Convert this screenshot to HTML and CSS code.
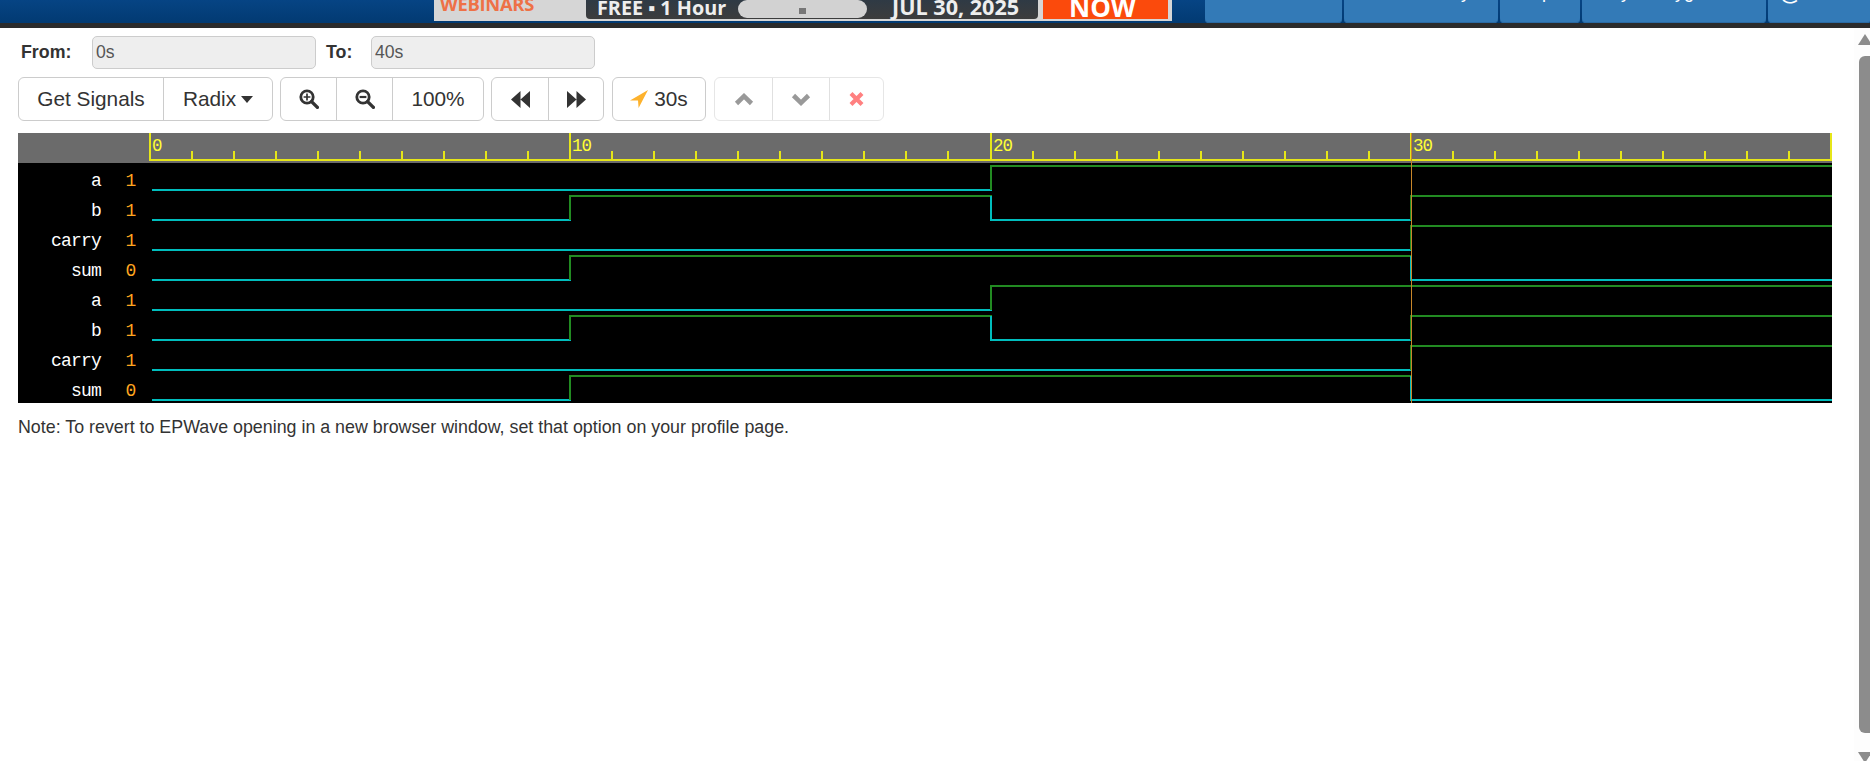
FILE: index.html
```html
<!DOCTYPE html>
<html lang="en">
<head>
<meta charset="utf-8">
<title>EPWave</title>
<link rel="stylesheet" href="styles.css">
</head>
<body>
<header class="topbar">
  <div class="banner">
    <span class="webinars">WEBINARS</span>
    <div class="promo">
      <span class="free">FREE ▪ 1 Hour</span>
      <span class="pill"><i class="pill-dot"></i></span>
      <span class="date">JUL 30, 2025</span>
    </div>
    <span class="now">NOW</span>
  </div>
  <nav class="tabs">
    <a class="tab tab1">Documentation</a>
    <a class="tab tab2">Community</a>
    <a class="tab tab3">Help</a>
    <a class="tab tab4">My Playground</a>
    <a class="tab tab5">@</a>
  </nav>
</header>
<div class="page">
  <main class="main">
    <div class="range">
      <label class="range-label from">From:</label>
      <input class="range-input" type="text" value="0s" disabled>
      <label class="range-label to">To:</label>
      <input class="range-input" type="text" value="40s" disabled>
    </div>
    <div class="toolbar">
      <div class="group">
        <button class="btn b-signals">Get Signals</button>
        <button class="btn b-radix">Radix<span class="caret"></span></button>
      </div>
      <div class="group">
        <button class="btn b-zoom1" aria-label="Zoom in">
          <svg class="ico" width="20" height="20" viewBox="0 0 20 20"><circle cx="8" cy="8" r="6.2" fill="none" stroke="#333" stroke-width="2.8"/><path d="M12.6 12.6L18.4 18.4" stroke="#333" stroke-width="3.4" stroke-linecap="round"/><path d="M8 4.6V11.4M4.6 8H11.4" stroke="#333" stroke-width="1.7"/></svg>
        </button>
        <button class="btn b-zoom2" aria-label="Zoom out">
          <svg class="ico" width="20" height="20" viewBox="0 0 20 20"><circle cx="8" cy="8" r="6.2" fill="none" stroke="#333" stroke-width="2.8"/><path d="M12.6 12.6L18.4 18.4" stroke="#333" stroke-width="3.4" stroke-linecap="round"/><path d="M4.6 8H11.4" stroke="#333" stroke-width="2.2"/></svg>
        </button>
        <button class="btn b-pct">100%</button>
      </div>
      <div class="group">
        <button class="btn b-step1" aria-label="Back">
          <svg class="ico" width="19" height="17" viewBox="0 0 19 17"><path d="M0 8.5L9.5 0V17ZM9.5 8.5L19 0V17Z" fill="#333"/></svg>
        </button>
        <button class="btn b-step2" aria-label="Forward">
          <svg class="ico" width="19" height="17" viewBox="0 0 19 17"><path d="M0 0L9.5 8.5L0 17ZM9.5 0L19 8.5L9.5 17Z" fill="#333"/></svg>
        </button>
      </div>
      <div class="group">
        <button class="btn b-cursor">
          <svg class="ico send" width="18" height="18" viewBox="0 0 18 18"><path d="M18 0L0 10.5H8L8.6 18Z" fill="#fdb22d"/></svg>30s
        </button>
      </div>
      <div class="group muted">
        <button class="btn b-up" aria-label="Up" disabled>
          <svg class="ico" width="20" height="13" viewBox="0 0 20 13"><path d="M2.5 10.5L10 3.2L17.5 10.5" fill="none" stroke="#999" stroke-width="4.6"/></svg>
        </button>
        <button class="btn b-down" aria-label="Down" disabled>
          <svg class="ico" width="20" height="13" viewBox="0 0 20 13"><path d="M2.5 2.5L10 9.8L17.5 2.5" fill="none" stroke="#999" stroke-width="4.6"/></svg>
        </button>
        <button class="btn b-x" aria-label="Remove" disabled>
          <svg class="ico" width="15" height="14" viewBox="0 0 15 14"><path d="M2 1.6L13 12.4M13 1.6L2 12.4" fill="none" stroke="#ff8080" stroke-width="4.2"/></svg>
        </button>
      </div>
    </div>
    <svg class="wave" width="1814" height="270" viewBox="18 133 1814 270" shape-rendering="crispEdges">
      <rect x="18" y="133" width="1814" height="30" fill="#6b6b6b"/>
      <rect x="18" y="163" width="1814" height="240" fill="#000"/>
      <path class="ruler" d="M149 160H1832M150 133V160M570 133V160M991 133V160M1411 133V160M1831 133V160"/>
      <path class="ruler" d="M192 151V160M234 151V160M276 151V160M318 151V160M360 151V160M402 151V160M444 151V160M486 151V160M528 151V160M612 151V160M654 151V160M696 151V160M738 151V160M780 151V160M822 151V160M864 151V160M906 151V160M948 151V160M1033 151V160M1075 151V160M1117 151V160M1159 151V160M1201 151V160M1243 151V160M1285 151V160M1327 151V160M1369 151V160M1453 151V160M1495 151V160M1537 151V160M1579 151V160M1621 151V160M1663 151V160M1705 151V160M1747 151V160M1789 151V160"/>
      <text class="tick" x="152" y="151">0</text>
      <text class="tick" x="572" y="151">10</text>
      <text class="tick" x="993" y="151">20</text>
      <text class="tick" x="1413" y="151">30</text>

      <text class="sig" x="101" y="186">a</text><text class="val" x="131" y="186">1</text>
      <text class="sig" x="101" y="216">b</text><text class="val" x="131" y="216">1</text>
      <text class="sig" x="101" y="246">carry</text><text class="val" x="131" y="246">1</text>
      <text class="sig" x="101" y="276">sum</text><text class="val" x="131" y="276">0</text>
      <text class="sig" x="101" y="306">a</text><text class="val" x="131" y="306">1</text>
      <text class="sig" x="101" y="336">b</text><text class="val" x="131" y="336">1</text>
      <text class="sig" x="101" y="366">carry</text><text class="val" x="131" y="366">1</text>
      <text class="sig" x="101" y="396">sum</text><text class="val" x="131" y="396">0</text>

      <path class="low" d="M152 190H992"/>
      <path class="high" d="M991 190V166H1832"/>
      <path class="low" d="M152 220H571"/>
      <path class="high" d="M570 220V196H992"/>
      <path class="low" d="M991 196V220H1412"/>
      <path class="high" d="M1411 220V196H1832"/>
      <path class="low" d="M152 250H1412"/>
      <path class="high" d="M1411 250V226H1832"/>
      <path class="low" d="M152 280H571"/>
      <path class="high" d="M570 280V256H1412"/>
      <path class="low" d="M1411 256V280H1832"/>

      <path class="low" d="M152 310H992"/>
      <path class="high" d="M991 310V286H1832"/>
      <path class="low" d="M152 340H571"/>
      <path class="high" d="M570 340V316H992"/>
      <path class="low" d="M991 316V340H1412"/>
      <path class="high" d="M1411 340V316H1832"/>
      <path class="low" d="M152 370H1412"/>
      <path class="high" d="M1411 370V346H1832"/>
      <path class="low" d="M152 400H571"/>
      <path class="high" d="M570 400V376H1412"/>
      <path class="low" d="M1411 376V400H1832"/>

      <path class="cursor" d="M1411 133V403"/>
    </svg>
    <p class="note">Note: To revert to EPWave opening in a new browser window, set that option on your profile page.</p>
  </main>
  <aside class="scrollbar">
    <svg class="arrow" width="16" height="11" viewBox="0 0 16 11"><path d="M4 11L11 0L18 11Z" fill="#8c8c8c"/></svg>
    <div class="thumb"></div>
    <svg class="arrow" width="16" height="9" viewBox="0 0 16 9"><path d="M4 0H18L11 11Z" fill="#8c8c8c"/></svg>
  </aside>
</div>
</body>
</html>
```

FILE: styles.css
```css
* { box-sizing: border-box; }
html, body { margin: 0; height: 761px; overflow: hidden; background: #fff; }
body { font-family: "Liberation Sans", Arial, sans-serif; color: #333; display: flex; flex-direction: column; }

.topbar {
  height: 28px; flex: none; display: flex; align-items: flex-start;
  background: linear-gradient(#064484, #023a72 23px, #2b2b2b 23px);
  overflow: hidden;
}
.banner {
  margin-left: 434px; width: 738px; height: 21px; flex: none; display: flex; align-items: flex-start;
  background: #d6d6d6; overflow: hidden; font-family: "Open Sans", sans-serif; font-weight: 700;
}
.webinars { margin: -8px 0 0 6px; width: 146px; font-size: 18.4px; line-height: 24px; color: #ee7146; letter-spacing: -0.3px; }
.promo {
  width: 452px; height: 19px; display: flex; align-items: flex-start; color: #eee;
  background: linear-gradient(#2f3a45, #3c3c3c); border-radius: 0 0 4px 4px;
}
.free { margin: -4px 0 0 11px; width: 141px; font-size: 19.8px; line-height: 24px; white-space: nowrap; }
.pill { width: 129px; height: 18px; background: #d2d2d2; border-radius: 9px; display: flex; align-items: center; justify-content: center; }
.pill-dot { width: 7px; height: 6px; margin-top: 4px; background: #777; }
.date { margin: -5px 0 0 25px; font-size: 21.6px; line-height: 24px; white-space: nowrap; }
.now {
  margin: 0 0 0 5px; width: 125px; height: 19px; padding-right: 6px; text-align: center; color: #fff; overflow: hidden;
  background: #fb4a0c; font-size: 26px; line-height: 14px;
}

.tabs { margin-left: 33px; display: flex; gap: 2px; height: 23px; flex: 1; }
.tab {
  height: 23px; background: #337ab7; border-radius: 0 0 4px 4px; color: #fff; font-size: 18px;
  line-height: 20px; white-space: nowrap; overflow: hidden; display: flex; align-items: flex-end; justify-content: flex-end;
  padding-bottom: 21px; box-shadow: inset 0 -1px 0 #2a6aa3;
}
.tab1 { width: 137px; padding-right: 20px; }
.tab2 { width: 154px; padding-right: 28px; }
.tab3 { width: 80px; padding-right: 28px; }
.tab4 { width: 184px; padding-right: 26px; word-spacing: 14px; }
.tab5 { width: 103px; justify-content: flex-start; padding-left: 11px; font-size: 23px; }

.page { flex: 1; display: flex; min-height: 0; }
.main { flex: 1; min-width: 0; padding: 8px 0 0 18px; }

.range { display: flex; align-items: center; height: 33px; }
.range-label { font-weight: 700; font-size: 17.8px; }
.from { margin-left: 3px; width: 71px; }
.to { margin-left: 10px; width: 45px; }
.range-input {
  width: 224px; height: 33px; padding: 0 3px; border: 1px solid #ccc; border-radius: 5px;
  background: #eee; color: #555; font: 17.6px "Liberation Sans", Arial, sans-serif;
}

.toolbar { display: flex; gap: 8px; margin-top: 8px; height: 44px; }
.group { display: flex; border: 1px solid #ccc; border-radius: 6px; background: #fff; }
.group.muted { border-color: #e6e6e6; }
.btn {
  height: 42px; padding: 0; border: 0; border-left: 1px solid #ccc; background: none; color: #333;
  font: 20.8px "Liberation Sans", Arial, sans-serif; display: flex; align-items: center; justify-content: center;
}
.btn:first-child { border-left: 0; }
.muted .btn { border-left-color: #e0e0e0; }
.b-signals { width: 144px; }
.b-radix { width: 109px; }
.caret { width: 0; height: 0; margin-left: 5px; border: solid transparent; border-width: 7px 6px 0; border-top-color: #333; }
.toolbar > .group:first-child { margin-right: -1px; }
.b-zoom1 { width: 55px; }
.b-zoom2 { width: 56px; }
.b-pct { width: 91px; }
.b-step1 { width: 56px; }
.b-step2 { width: 55px; }
.b-cursor { width: 92px; }
.send { margin-right: 6px; }
.b-up { width: 57px; }
.b-down { width: 57px; }
.b-x { width: 54px; }
.ico { display: block; flex: none; }
.toolbar > .group:nth-child(2) { margin-right: -1px; }

.wave { display: block; margin-top: 12px; }
.ruler { fill: none; stroke: #e6e619; stroke-width: 2; }
.tick { font: 17.5px "Liberation Mono", monospace; letter-spacing: -1px; fill: #ffff33; }
.sig { font: 18px "Liberation Mono", monospace; letter-spacing: -0.8px; fill: #fff; text-anchor: end; }
.val { font: 18px "Liberation Mono", monospace; fill: #ffa51f; text-anchor: middle; }
.low { fill: none; stroke: #00bdbd; stroke-width: 2; }
.high { fill: none; stroke: #228b22; stroke-width: 2; }
.cursor { fill: none; stroke: #c8862a; stroke-width: 1; }

.note { margin: 14px 0 0; font-size: 17.83px; line-height: 20px; color: #333; }

.scrollbar { width: 16px; flex: none; background: #fdfdfd; display: flex; flex-direction: column; align-items: stretch; padding-top: 6px; overflow: hidden; }
.arrow { display: block; flex: none; }
.thumb { margin: 11px 0 19px 5px; width: 11px; height: 677px; background: #8c8c8c; border-radius: 6px 0 0 6px; }
```
